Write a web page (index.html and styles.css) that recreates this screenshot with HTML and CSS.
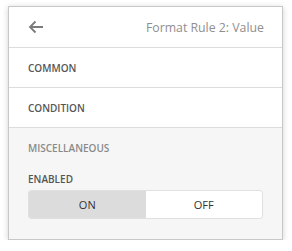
FILE: index.html
```html
<!DOCTYPE html>
<html lang="en">
<head>
  <meta charset="UTF-8">
  <meta name="viewport" content="width=device-width, initial-scale=1.0">
  <title>Format Rule 2: Value</title>
  <link rel="stylesheet" href="styles.css">
</head>
<body>
  <div class="panel">
    <!-- header -->
    <div class="header">
      <svg class="back" width="16" height="14" viewBox="0 0 16 14">
        <path d="M15 7H2M7.5 1.5L2 7l5.5 5.5" fill="none" stroke="#7a7a7a" stroke-width="1.8"/>
      </svg>
      <span class="title">Format Rule 2: Value</span>
    </div>
    <div class="group">COMMON</div>
    <div class="group">CONDITION</div>
    <div class="group open">
      <div class="group-title">MISCELLANEOUS</div>
      <div class="field-label">ENABLED</div>
      <div class="switch">
        <div class="seg on">ON</div>
        <div class="seg">OFF</div>
      </div>
    </div>
  </div>
</body>
</html>
```
FILE: styles.css
```css
body {
  margin: 0;
  background: #fff;
  font-family: "Open Sans", "Noto Sans", sans-serif;
}
.panel {
  margin: 6px 0 0 8px;
  width: 273px;
  height: 232px;
  border: 1px solid #c8c8c8;
  box-shadow: 0 1px 6px rgba(0, 0, 0, 0.18);
  display: flex;
  flex-direction: column;
  background: #fff;
}
.header {
  height: 40px;
  border-bottom: 1px solid #dcdcdc;
  display: flex;
  align-items: center;
  justify-content: space-between;
  padding: 0 18px 0 19px;
}
.back {
  display: block;
}
.title {
  font-size: 12.3px;
  color: #8f8f8f;
}
.group {
  height: 39px;
  border-bottom: 1px solid #dcdcdc;
  display: flex;
  align-items: center;
  padding-left: 19px;
  font-size: 10px;
  font-weight: 600;
  color: #555;
}
.group.open {
  flex: 1;
  display: block;
  border-bottom: none;
  background: #f6f6f6;
  padding: 0 19px;
}
.group-title {
  height: 41px;
  line-height: 41px;
  color: #8a8a8a;
}
.field-label {
  margin-top: 2px;
  line-height: 16px;
  color: #555;
}
.switch {
  margin-top: 3px;
  height: 27px;
  display: flex;
  border: 1px solid #e0e0e0;
  border-radius: 3px;
  overflow: hidden;
  background: #fff;
}
.seg {
  flex: 1;
  display: flex;
  align-items: center;
  justify-content: center;
  font-size: 11px;
  font-weight: 400;
  color: #333;
}
.seg.on {
  background: #dcdcdc;
}
```
